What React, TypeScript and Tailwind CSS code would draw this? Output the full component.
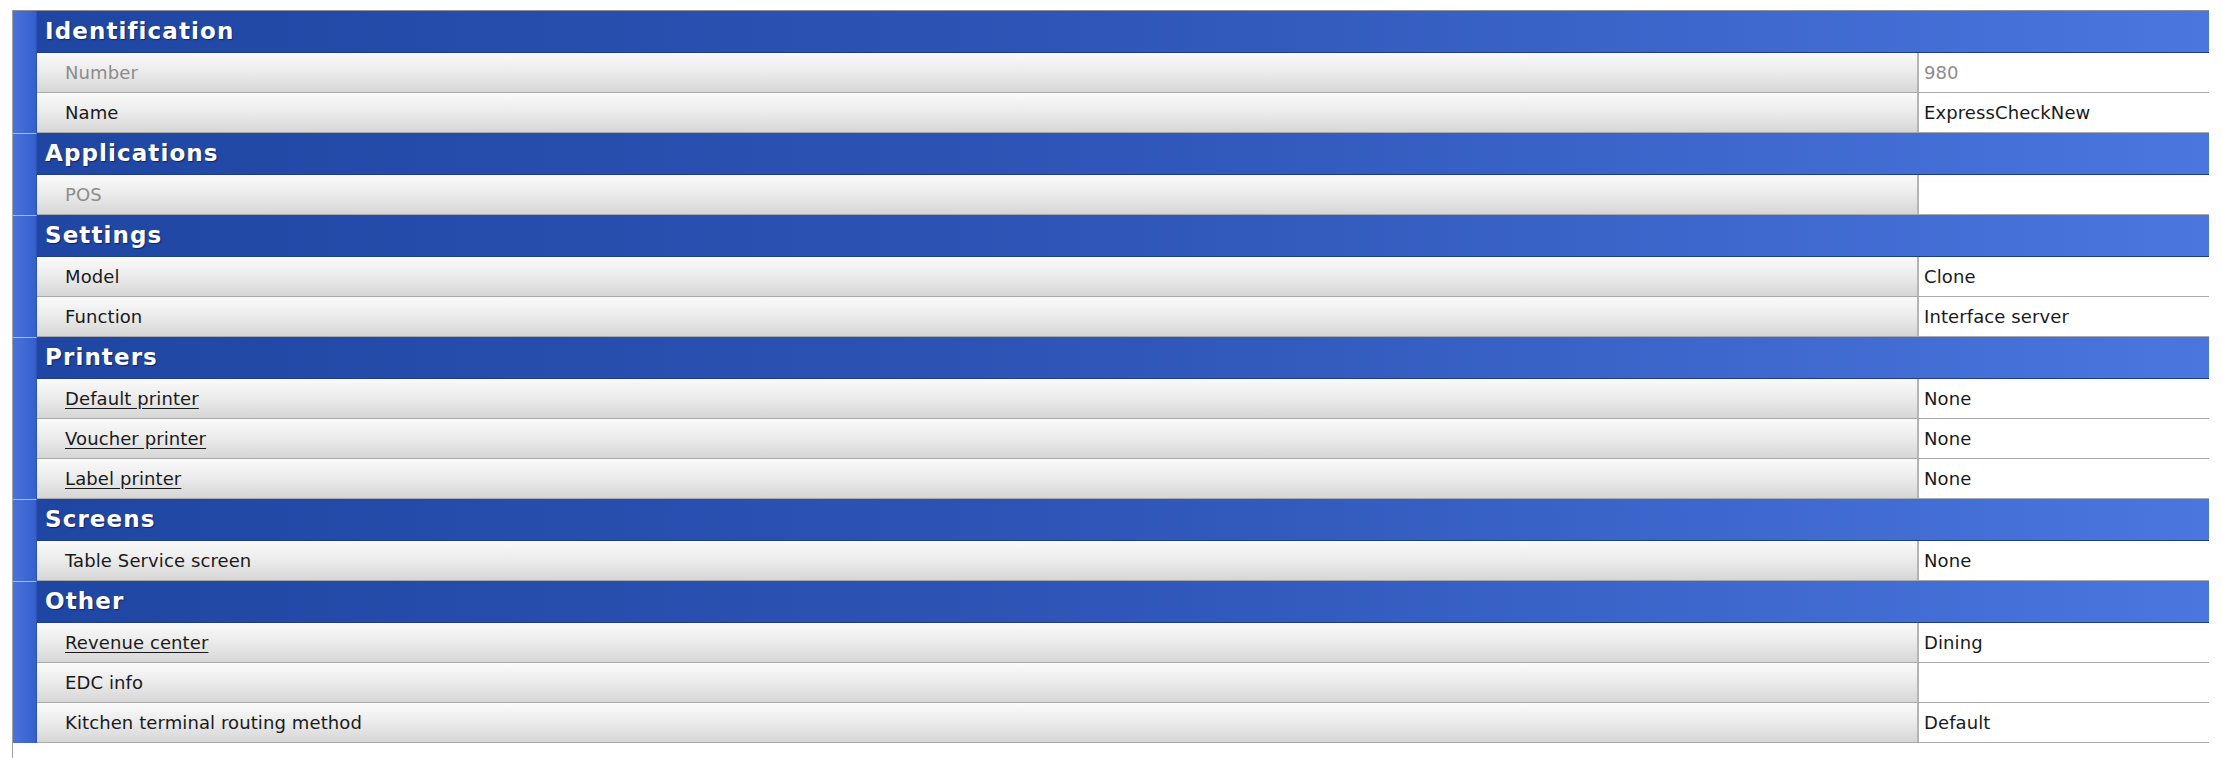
import React from "react";

type Row = {
  label: string;
  value?: string;
  disabled?: boolean;
  link?: boolean;
};

type Section = {
  title: string;
  rows: Row[];
};

const sections: Section[] = [
  {
    title: "Identification",
    rows: [
      { label: "Number", value: "980", disabled: true },
      { label: "Name", value: "ExpressCheckNew" },
    ],
  },
  {
    title: "Applications",
    rows: [{ label: "POS", disabled: true }],
  },
  {
    title: "Settings",
    rows: [
      { label: "Model", value: "Clone" },
      { label: "Function", value: "Interface server" },
    ],
  },
  {
    title: "Printers",
    rows: [
      { label: "Default printer", value: "None", link: true },
      { label: "Voucher printer", value: "None", link: true },
      { label: "Label printer", value: "None", link: true },
    ],
  },
  {
    title: "Screens",
    rows: [{ label: "Table Service screen", value: "None" }],
  },
  {
    title: "Other",
    rows: [
      { label: "Revenue center", value: "Dining", link: true },
      { label: "EDC info" },
      { label: "Kitchen terminal routing method", value: "Default" },
    ],
  },
];

function PropertyRow({ row }: { row: Row }) {
  const tone = row.disabled ? "text-[#8c8c8c]" : "text-[#1a1a1a]";
  return (
    <div className="flex h-[40px] border-b border-[#a9a9a9]">
      {/* name cell, shaded like a button face */}
      <div className="flex flex-1 items-center border-r-2 border-[#b4b4b4] bg-gradient-to-b from-[#fafafa] via-[#ebebeb] to-[#d6d6d6] pl-[28px]">
        <span
          className={`text-[18px] tracking-[0.1px] ${tone} ${
            row.link ? "underline underline-offset-[3px]" : ""
          }`}
        >
          {row.label}
        </span>
      </div>
      {/* value cell */}
      <div className="flex w-[290px] items-center bg-white pl-[5px]">
        <span className={`text-[18px] tracking-[0.1px] ${tone}`}>{row.value ?? ""}</span>
      </div>
    </div>
  );
}

function PropertySection({ section, first }: { section: Section; first: boolean }) {
  return (
    <div className="flex">
      {/* left gutter, split per group */}
      <div
        className={`w-[24px] shrink-0 border-r border-[#2c52b8] bg-gradient-to-r from-[#4a72dc] to-[#3560cc] ${
          first ? "" : "border-t border-t-[#a8b8e0]"
        }`}
      />
      <div className="flex flex-1 flex-col">
        <div className="flex h-[42px] items-center border-b border-[#1c3c8c] bg-gradient-to-r from-[#1f46a2] via-[#2f56b8] to-[#4a76de] pl-[8px]">
          <span className="text-[23px] font-bold tracking-[1.1px] text-white [text-shadow:1px_1px_1px_rgba(0,0,40,0.5)]">
            {section.title}
          </span>
        </div>
        {section.rows.map((row) => (
          <PropertyRow key={row.label} row={row} />
        ))}
      </div>
    </div>
  );
}

export default function App() {
  return (
    <div
      className="h-[758px] w-[2222px] overflow-hidden bg-white pt-[10px] pl-[12px]"
      style={{ fontFamily: '"DejaVu Sans", "Liberation Sans", sans-serif' }}
    >
      <div className="h-full w-[2197px] border-l border-[#a0a0a0]">
        <div className="flex flex-col border-t border-[#8f8f8f]">
          {sections.map((s, i) => (
            <PropertySection key={s.title} section={s} first={i === 0} />
          ))}
        </div>
      </div>
    </div>
  );
}
